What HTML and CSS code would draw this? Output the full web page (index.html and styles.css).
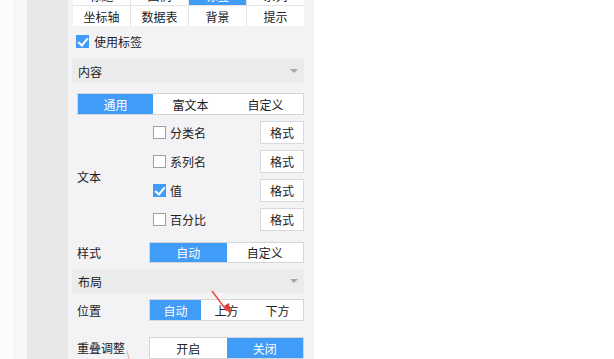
FILE: index.html
```html
<!DOCTYPE html>
<html lang="zh">
<head>
    <meta charset="utf-8">
    <title>标签设置</title>
    <link rel="stylesheet" href="styles.css">
</head>
<body>
    <div class="edge-a"></div>
    <div class="edge-b"></div>
    <div class="rail"></div>

    <div class="panel">
        <div class="tabs">
            <div class="tab">标题</div>
            <div class="tab">图例</div>
            <div class="tab active">标签</div>
            <div class="tab">系列</div>
            <div class="tab">坐标轴</div>
            <div class="tab">数据表</div>
            <div class="tab">背景</div>
            <div class="tab">提示</div>
        </div>

        <label class="check use-label">
            <span class="box checked"></span>使用标签
        </label>

        <div class="section-head">
            <span>内容</span>
            <span class="caret"></span>
        </div>

        <div class="seg seg-wide">
            <div class="seg-item active">通用</div>
            <div class="seg-item">富文本</div>
            <div class="seg-item">自定义</div>
        </div>

        <div class="field field-text">
            <div class="field-label">文本</div>
            <div class="options">
                <div class="option">
                    <label class="check"><span class="box"></span>分类名</label>
                    <button class="fmt-btn">格式</button>
                </div>
                <div class="option">
                    <label class="check"><span class="box"></span>系列名</label>
                    <button class="fmt-btn">格式</button>
                </div>
                <div class="option">
                    <label class="check"><span class="box checked"></span>值</label>
                    <button class="fmt-btn">格式</button>
                </div>
                <div class="option">
                    <label class="check"><span class="box"></span>百分比</label>
                    <button class="fmt-btn">格式</button>
                </div>
            </div>
        </div>

        <div class="field field-style">
            <div class="field-label top">样式</div>
            <div class="seg">
                <div class="seg-item active">自动</div>
                <div class="seg-item">自定义</div>
            </div>
        </div>

        <div class="section-head layout-head">
            <span>布局</span>
            <span class="caret"></span>
        </div>

        <div class="field field-pos">
            <div class="field-label">位置</div>
            <div class="seg">
                <div class="seg-item active">自动</div>
                <div class="seg-item">上方</div>
                <div class="seg-item">下方</div>
            </div>
        </div>

        <div class="field field-overlap">
            <div class="field-label top">重叠调整</div>
            <div class="seg">
                <div class="seg-item">开启</div>
                <div class="seg-item active">关闭</div>
            </div>
        </div>
    </div>

    <div class="canvas"></div>

    <svg class="marks" width="614" height="359" viewBox="0 0 614 359">
        <line x1="212" y1="291" x2="227" y2="311" stroke="#e8453c" stroke-width="1.4"/>
        <polygon points="224,306 231,315 229,303" fill="#e23b33"/>
        <line x1="127" y1="351" x2="129" y2="359" stroke="#f3a9a6" stroke-width="1"/>
    </svg>
</body>
</html>
```

FILE: styles.css
```css
* {
    box-sizing: border-box;
    margin: 0;
    padding: 0;
}

body {
    display: flex;
    height: 359px;
    overflow: hidden;
    font-family: "Noto Sans CJK SC", "Noto Sans", sans-serif;
    font-size: 12px;
    color: #222;
    background: #fff;
}

.edge-a { width: 13px; background: #fcfcfc; }
.edge-b { width: 14px; background: #f7f7f7; }
.rail { width: 41px; background: #e8e8e8; }

.panel {
    width: 246px;
    padding: 0 10px 0 4px;
    background: #f3f3f6;
    flex-shrink: 0;
}

.canvas {
    flex: 1;
    background: #fff;
}

.tabs {
    display: grid;
    grid-template-columns: repeat(4, 1fr);
    grid-auto-rows: 20px;
    gap: 1px;
    margin: -15px 0 0 1px;
    background: #e4e4e6;
}

.tab {
    display: flex;
    align-items: center;
    justify-content: center;
    background: #fff;
}

.tab.active {
    background: #419cf7;
    color: #fff;
}

/* checkboxes */
.check {
    display: flex;
    align-items: center;
    gap: 4px;
    line-height: 13px;
}

.box {
    width: 13px;
    height: 13px;
    border: 1px solid #a0a0a0;
    background: #fff;
    position: relative;
    flex-shrink: 0;
}

.box.checked {
    border-color: #419cf7;
    background: #419cf7;
}

.box.checked::after {
    content: "";
    position: absolute;
    left: 3px;
    top: 0px;
    width: 4px;
    height: 8px;
    border: solid #fff;
    border-width: 0 2px 2px 0;
    transform: rotate(40deg);
}

.use-label {
    margin: 9px 0 0 4px;
    height: 13px;
    gap: 5px;
}

/* section headers */
.section-head {
    display: flex;
    align-items: center;
    justify-content: space-between;
    height: 24px;
    margin-top: 11px;
    padding: 0 6px;
    background: #ebebeb;
}

.caret {
    width: 0;
    height: 0;
    border-left: 4px solid transparent;
    border-right: 4px solid transparent;
    border-top: 4px solid #a6a6a6;
}

.layout-head {
    margin-top: 6px;
}

/* segmented buttons */
.seg {
    display: flex;
    flex: 1;
    height: 22px;
    border: 1px solid #d6d6d8;
    background: #fff;
}

.seg-item {
    flex: 1;
    display: flex;
    align-items: center;
    justify-content: center;
}

.seg-item.active {
    background: #419cf7;
    color: #fff;
}

.seg-wide {
    margin: 10px 0 0 5px;
}

/* label + control rows */
.field {
    display: flex;
    align-items: center;
    padding-left: 5px;
}

.field-label {
    width: 72px;
    flex-shrink: 0;
}

.field-label.top {
    align-self: flex-start;
    padding-top: 2px;
}

.field-text {
    margin-top: 6px;
}

.options {
    flex: 1;
    display: flex;
    flex-direction: column;
    gap: 6px;
    padding-left: 4px;
}

.option {
    display: flex;
    align-items: center;
    justify-content: space-between;
    height: 23px;
}

.fmt-btn {
    width: 44px;
    height: 23px;
    border: 1px solid #d9d9db;
    background: #fff;
    font: inherit;
    color: #222;
}

.field-style {
    margin-top: 11px;
}

.field-style .seg {
    height: 21px;
}

.field-pos {
    margin-top: 6px;
}

.field-overlap {
    margin-top: 16px;
}

.marks {
    position: absolute;
    left: 0;
    top: 0;
    pointer-events: none;
}
```
